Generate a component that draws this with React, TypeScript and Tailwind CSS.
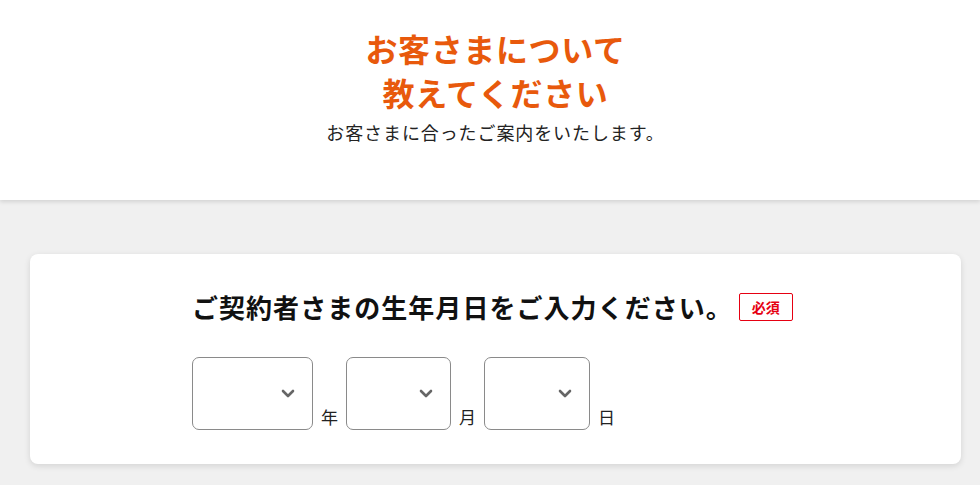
// お客さま情報入力：生年月日
const font = "font-['Noto_Sans_CJK_JP','Noto_Sans',sans-serif]";

function Chevron() {
  return (
    <svg viewBox="0 0 14 9" className="h-[9px] w-[14px]" fill="none">
      <path d="M2 2l5 5 5-5" stroke="#666" strokeWidth="2.6" strokeLinecap="round" strokeLinejoin="round" />
    </svg>
  );
}

function DateSelect({ width }: { width: string }) {
  return (
    <div className={`relative h-[73px] ${width} rounded-[7px] border border-[#8a8a8a] bg-white`}>
      <div className="absolute right-[17px] top-[31px]">
        <Chevron />
      </div>
    </div>
  );
}

export default function App() {
  return (
    <div className={`min-h-[485px] bg-[#f0f0f0] ${font}`}>
      <header className="relative z-10 h-[200px] bg-white pl-[30px] pr-[19px] pt-[26px] text-center shadow-[0_2px_4px_rgba(0,0,0,0.12)]">
        <h1 className="text-[32px] font-bold leading-[44px] tracking-[0.02em] text-[#e8590c]">
          お客さまについて
          <br />
          教えてください
        </h1>
        <p className="mt-[5px] text-[18px] leading-[27px] tracking-[0.05em] text-[#222]">
          お客さまに合ったご案内をいたします。
        </p>
      </header>

      <main className="pt-[54px] pb-[21px]">
        <section className="ml-[30px] w-[931px] rounded-[8px] bg-white pl-[162px] pt-[37px] pb-[34px] shadow-[0_2px_6px_rgba(0,0,0,0.12)]">
          <div className="flex items-center gap-[6px]">
            <h2 className="text-[26px] font-bold leading-[32px] tracking-[0.04em] text-[#111]">
              ご契約者さまの生年月日をご入力ください。
            </h2>
            <span className="flex h-[28px] w-[54px] items-center justify-center rounded-[2px] border border-[#e60012] text-[14px] font-bold text-[#e60012]">
              必須
            </span>
          </div>

          <div className="mt-[34px] flex items-end">
            <DateSelect width="w-[121px]" />
            <span className="mx-[8px] text-[17px] leading-[26px] text-[#222]">年</span>
            <DateSelect width="w-[105px]" />
            <span className="mx-[8px] text-[17px] leading-[26px] text-[#222]">月</span>
            <DateSelect width="w-[106px]" />
            <span className="mx-[8px] text-[17px] leading-[26px] text-[#222]">日</span>
          </div>
        </section>
      </main>
    </div>
  );
}
